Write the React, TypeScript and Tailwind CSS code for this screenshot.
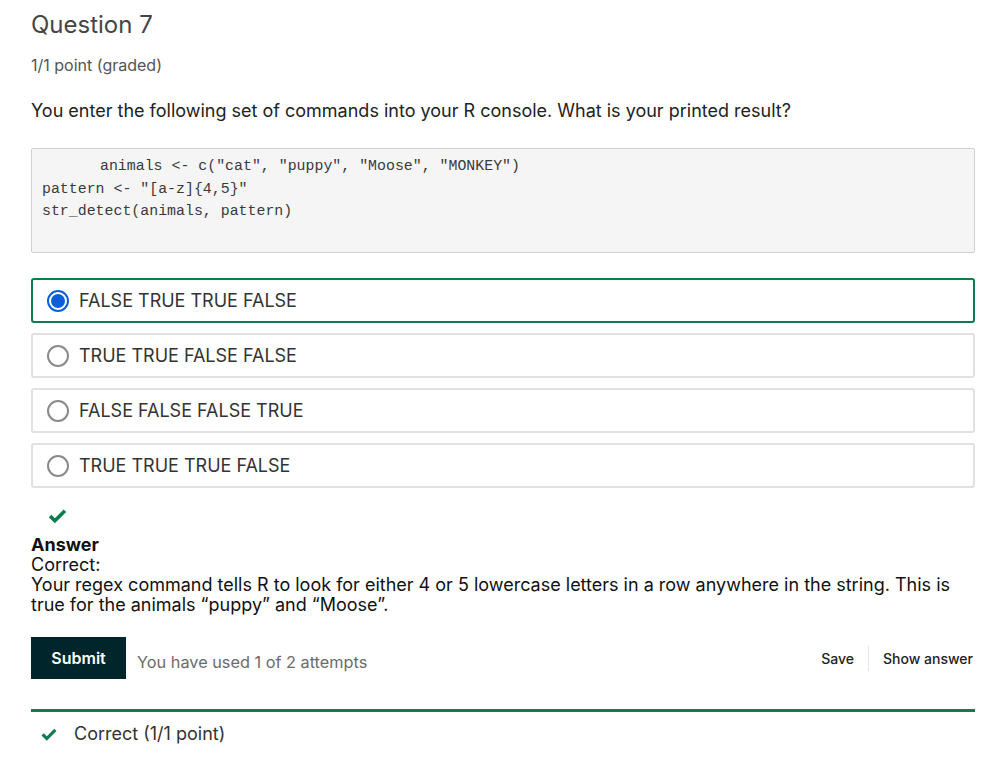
import React from "react";

const Check = ({ className }: { className?: string }) => (
  <svg viewBox="0 0 24 24" className={className} fill="none" stroke="currentColor" strokeWidth="4.2" strokeLinecap="butt" strokeLinejoin="miter">
    <path d="M3.5 12.5 9 18 20.5 6.5" />
  </svg>
);

const options = [
  "FALSE TRUE TRUE FALSE",
  "TRUE TRUE FALSE FALSE",
  "FALSE FALSE FALSE TRUE",
  "TRUE TRUE TRUE FALSE",
];

export default function App() {
  return (
    <div className="min-h-[760px] w-[997px] bg-white pl-[31px] pr-[22px] pt-[10px] font-['Inter','Noto_Sans',sans-serif] text-[#222]">
      <h2 className="text-[24px] leading-[30px] text-[#454545] font-normal">Question 7</h2>
      <div className="mt-[13px] text-[16px] leading-[24px] text-[#555]">1/1 point (graded)</div>
      <p className="mt-[21px] text-[18px] leading-[26px] text-[#222]">
        You enter the following set of commands into your R console. What is your printed result?
      </p>
      <div className="mt-[24px] h-[105px] rounded-[2px] border border-[#d0d0d0] bg-[#f5f5f5] px-[10px] pt-[6px] font-['Liberation_Mono',monospace] text-[14.9px] leading-[22.5px] text-[#3a3a3a]">
        <div className="pl-[58px]">animals &lt;- c("cat", "puppy", "Moose", "MONKEY")</div>
        <div>pattern &lt;- "[a-z]{"{"}4,5{"}"}"</div>
        <div>str_detect(animals, pattern)</div>
      </div>
      <div className="mt-[25px] flex flex-col gap-[10px]">
        {options.map((o, i) => (
          <div
            key={o}
            className={
              i === 0
                ? "flex h-[45px] items-center rounded-[3px] border-2 border-[#0d7d4d] pl-[14px]"
                : "flex h-[45px] items-center rounded-[3px] border-2 border-[#e1e1e1] pl-[14px]"
            }
          >
            {i === 0 ? (
              <span className="flex h-[22px] w-[22px] items-center justify-center rounded-full border-[2px] border-[#0a5ed7] bg-white">
                <span className="h-[14px] w-[14px] rounded-full bg-[#0a5ed7]" />
              </span>
            ) : (
              <span className="h-[22px] w-[22px] rounded-full border-[2px] border-[#8a8a8a] bg-white" />
            )}
            <span className="ml-[10px] text-[18px] leading-[24px] text-[#333]">{o}</span>
          </div>
        ))}
      </div>
      <div className="mt-[17px] pl-[16px] text-[#0d7d4d]">
        <Check className="h-[21px] w-[21px]" />
      </div>
      <div className="mt-[9px] text-[18px] leading-[20px] text-[#111]">
        <div className="font-bold">Answer</div>
        <div>Correct:</div>
        <div>
          Your regex command tells R to look for either 4 or 5 lowercase letters in a row anywhere in the string. This is
          true for the animals “puppy” and “Moose”.
        </div>
      </div>
      <div className="mt-[22px] flex items-center">
        <button className="h-[42px] w-[95px] bg-[#00262b] text-[16px] font-semibold text-white">Submit</button>
        <span className="ml-[11px] mt-[8px] text-[16.3px] text-[#6b6b6b]">You have used 1 of 2 attempts</span>
        <div className="ml-auto flex items-center text-[14px] font-medium text-[#222]">
          <span className="pr-[14px]">Save</span>
          <span className="h-[25px] w-px bg-[#e5e5e5]" />
          <span className="pl-[14px] pr-[2px]">Show answer</span>
        </div>
      </div>
      <div className="mt-[30px] h-[3px] bg-[#0d7d4d]" />
      <div className="mt-[10px] flex items-center pl-[9px]">
        <Check className="h-[18px] w-[18px] text-[#0d7d4d]" />
        <span className="ml-[16px] text-[18px] leading-[24px] text-[#333]">Correct (1/1 point)</span>
      </div>
    </div>
  );
}
